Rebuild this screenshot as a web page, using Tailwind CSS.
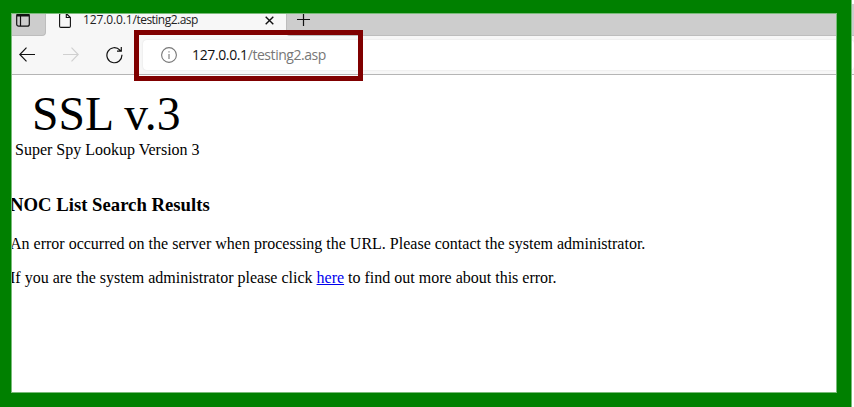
<!DOCTYPE html>
<html lang="en">
<head>
<meta charset="utf-8">
<title>127.0.0.1/testing2.asp</title>
<script src="https://cdn.jsdelivr.net/npm/@tailwindcss/browser@4"></script>
</head>
<body class="bg-white text-black overflow-hidden">
<div class="relative w-[854px] h-[407px] overflow-hidden flex flex-col whitespace-nowrap">
  <div class="h-[36px] shrink-0 bg-[#f7f7f7] flex font-['Open_Sans',sans-serif]">
    <div class="w-[46px] h-[36px] bg-[#cdcdcd] rounded-br-[4px] border-r border-b border-[#bdbdbd] pl-[16px] pt-[13px]">
      <svg class="w-[14px] h-[14px]" viewBox="0 0 14 14" fill="none" stroke="#111" stroke-width="1.2"><rect x=".7" y=".6" width="12.6" height="12.6" rx="2"/><path d="M1 2H13" stroke-width="3"/><path d="M4.5 3V13"/></svg>
    </div>
    <div class="w-[240px] flex pl-[13px] pt-[13px]">
      <svg class="w-[12px] h-[15px] shrink-0" viewBox="0 0 12 15" fill="none" stroke="#111" stroke-width="1.1"><path d="M7.3 .5H1.8Q.6.5.6 1.7V13.3Q.6 14.4 1.8 14.4H10.2Q11.4 14.4 11.4 13.3V4.5ZM7.3 .5V4.5H11.4"/></svg>
      <span class="w-[180px] ml-[12px] text-[12px] leading-[14px] tracking-[-0.12px] text-[#222]">127.0.0.1<span class="tracking-[-0.52px]">/testing2.asp</span></span>
      <svg class="w-[9px] h-[9px] mt-[3px] ml-[2px] shrink-0" viewBox="0 0 9 9" stroke="#111" stroke-width="1.4"><path d="M.7.7L8.3 8.3M8.3.7L.7 8.3"/></svg>
    </div>
    <div class="flex-1 bg-[#cdcdcd] border-l border-b border-[#bdbdbd] rounded-bl-[4px] pl-[10px] pt-[13px]">
      <svg class="w-[14px] h-[14px]" viewBox="0 0 14 14" stroke="#111" stroke-width="1.2"><path d="M0 6.5H13M6.5 0V13"/></svg>
    </div>
  </div>
  <div class="h-[39px] shrink-0 bg-[#f7f7f7] border-b border-[#b5b5b5] flex font-['Open_Sans',sans-serif]">
    <svg class="w-[16px] h-[16px] ml-[19px] mt-[11px] shrink-0" viewBox="0 0 16 16" fill="none" stroke="#111" stroke-width="1.2"><path d="M16 7.5H.8M7.5.7L.8 7.5L7.5 14.3"/></svg>
    <svg class="w-[16px] h-[16px] ml-[28px] mt-[11px] shrink-0" viewBox="0 0 16 16" fill="none" stroke="#d0d0d0" stroke-width="1.2"><path d="M0 7.5H15.2M8.5.7L15.2 7.5L8.5 14.3"/></svg>
    <svg class="w-[18px] h-[18px] ml-[27px] mt-[10px] shrink-0" viewBox="0 0 18 18" fill="none" stroke="#111" stroke-width="1.2"><path d="M15.9 8.8A7.5 7.5 0 1 1 13.9 4.1L14.9 5.2M15.3 1V5.2H11"/></svg>
    <div class="h-[30px] mt-[4px] ml-[19px] flex-1 bg-white rounded-[4px] shadow-[0_0_2px_#dddddd] flex pl-[18px]">
      <svg class="w-[16px] h-[16px] mt-[7px] shrink-0" viewBox="0 0 16 16" fill="none" stroke="#777" stroke-width="1.1"><circle cx="8" cy="8" r="7.4"/><path d="M8 7V12M8 4.2V5.6"/></svg>
      <span class="ml-[15px] text-[14px] leading-[30px] tracking-[-0.37px] text-[#111]">127.0.0.1<span class="text-[#777] tracking-[-0.45px]">/testing2.asp</span></span>
    </div>
  </div>
  <main class="flex-1 bg-white pl-[10px] font-['Liberation_Serif',serif] text-[16px]">
    <div class="pl-[22px] pt-[11px] text-[47.6px] leading-[56px]">SSL v.3</div>
    <div class="pl-[5px] -mt-px h-[19px] leading-[18px]">Super Spy Lookup Version 3</div>
    <h3 class="mt-[35px] h-[20px] text-[18.72px] leading-[20px] font-bold">NOC List Search Results</h3>
    <p class="mt-[20px] h-[18px] leading-[18px]">An error occurred on the server when processing the URL. Please contact the system administrator.</p>
    <p class="mt-[16px] h-[18px] leading-[18px]">If you are the system administrator please click <a class="text-[#0000ee] underline">here</a> to find out more about this error.</p>
  </main>
  <div class="absolute left-[134px] top-[30px] w-[229px] h-[51px] border-[5px] border-[#800000]"></div>
  <div class="absolute left-0 top-0 w-[852px] h-[407px] border-[#008000] border-l-[11px] border-t-[13px] border-r-[15px] border-b-[14px]"><div class="w-full h-full border border-[#79bb79]"></div></div>
  <div class="absolute left-[851px] top-0 w-px h-[407px] bg-[#79bb79]"></div>
  <div class="absolute left-[852px] top-0 w-[2px] h-[4px] bg-white"></div>
</div>
</body>
</html>
